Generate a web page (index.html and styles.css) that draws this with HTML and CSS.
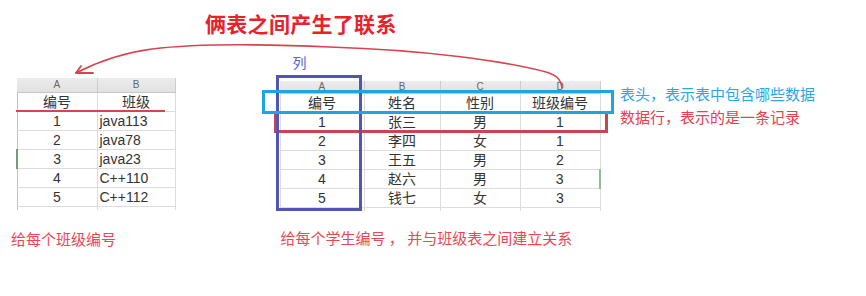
FILE: index.html
```
<!DOCTYPE html>
<html lang="zh-CN">
<head>
<meta charset="utf-8">
<title>俩表之间产生了联系</title>
<link rel="stylesheet" href="styles.css">
</head>
<body>
<h1 class="title">俩表之间产生了联系</h1>
<main class="stage">
  <section class="panel panel-class">
    <table class="sheet sheet-class">
      <colgroup><col class="w80"><col class="w78"></colgroup>
      <tr class="letters"><th>A</th><th>B</th></tr>
      <tr><td>编号</td><td>班级</td></tr>
      <tr><td>1</td><td class="left">java113</td></tr>
      <tr><td>2</td><td class="left">java78</td></tr>
      <tr><td class="sel-left">3</td><td class="left">java23</td></tr>
      <tr><td>4</td><td class="left">C++110</td></tr>
      <tr><td>5</td><td class="left">C++112</td></tr>
      <tr class="stub"><td></td><td></td></tr>
    </table>
    <p class="note note-class">给每个班级编号</p>
  </section>
  <section class="panel panel-student">
    <p class="col-label">列</p>
    <table class="sheet sheet-student">
      <colgroup><col class="w84"><col class="w76"><col class="w80"><col class="w80"></colgroup>
      <tr class="letters"><th>A</th><th>B</th><th>C</th><th>D</th></tr>
      <tr><td>编号</td><td>姓名</td><td>性别</td><td>班级编号</td></tr>
      <tr><td>1</td><td>张三</td><td>男</td><td>1</td></tr>
      <tr><td>2</td><td>李四</td><td>女</td><td>1</td></tr>
      <tr><td>3</td><td>王五</td><td>男</td><td>2</td></tr>
      <tr><td>4</td><td>赵六</td><td>男</td><td class="sel-right">3</td></tr>
      <tr><td>5</td><td>钱七</td><td>女</td><td>3</td></tr>
      <tr class="stub"><td></td><td></td><td></td><td></td></tr>
    </table>
    <p class="note note-student">给每个学生编号 ， 并与班级表之间建立关系</p>
  </section>
  <aside class="legend">
    <p class="legend-head">表头，表示表中包含哪些数据</p>
    <p class="legend-row">数据行，表示的是一条记录</p>
  </aside>
</main>
<div class="underline"></div>
<div class="box box-row"></div>
<div class="box box-col"></div>
<div class="box box-head"></div>
<svg class="arrow" width="866" height="296" viewBox="0 0 866 296">
  <path d="M562 88 C561 79 556 75 546 72 C505 61 425 50 330 47 C262 44 192 44 152 49 C122 53 97 62 76 73" fill="none" stroke="#d8434e" stroke-width="1.6" stroke-linecap="round"/>
  <path d="M81 66 L76 73 L93 73" fill="none" stroke="#d8434e" stroke-width="1.8" stroke-linecap="round" stroke-linejoin="round"/>
</svg>
</body>
</html>
```

FILE: styles.css
```
html, body {
  margin: 0;
  padding: 0;
}
body {
  position: relative;
  width: 866px;
  height: 296px;
  overflow: hidden;
  background: #ffffff;
  font-family: "Noto Sans CJK SC", "Liberation Sans", sans-serif;
}
.title {
  margin: 0;
  padding: 9px 0 0 205px;
  height: 28px;
  font-size: 21px;
  line-height: 28px;
  font-weight: bold;
  color: #e8212b;
  letter-spacing: 0.3px;
}
.stage {
  display: flex;
  align-items: flex-start;
}
.panel {
  display: flex;
  flex-direction: column;
}
.panel-class {
  margin: 41px 0 0 16px;
}
.panel-student {
  margin: 17px 0 0 104px;
}
.col-label {
  margin: 0;
  padding-left: 13px;
  height: 16px;
  font-size: 14px;
  line-height: 16px;
  color: #5b5fd3;
}
.sheet {
  border-collapse: collapse;
  table-layout: fixed;
  font-family: "Liberation Sans", "Noto Sans CJK SC", sans-serif;
  font-size: 14px;
  line-height: 17px;
  color: #333333;
}
.sheet-student {
  margin-top: 11px;
}
.w80 { width: 80px; }
.w78 { width: 78px; }
.w84 { width: 84px; }
.w76 { width: 76px; }
.sheet th {
  padding: 0;
  font-weight: normal;
  font-size: 10px;
  color: #666666;
  background: linear-gradient(#ececec, #e1e1e1);
  border-right: 1px solid #cdcdcd;
  border-bottom: 1px solid #c6c6c6;
}
.sheet-class th {
  height: 14px;
  line-height: 14px;
}
.sheet-student th {
  height: 12px;
  line-height: 12px;
}
.sheet td {
  padding: 1px 0 0;
  height: 16px;
  text-align: center;
  border: 1px solid #dcdcdc;
  white-space: nowrap;
}
.sheet td.left {
  text-align: left;
  padding-left: 2px;
}
.sheet-class td:first-child {
  border-left: 1px solid #c2c2c2;
}
.sheet td.sel-left {
  border-left: 2px solid #6e9e78;
}
.sheet td.sel-right {
  border-right: 2px solid #8fbf95;
}
.sheet tr.stub td {
  height: 3px;
  padding: 0;
  line-height: 0;
  border-bottom: none;
}
.note {
  margin: 0;
  font-family: "Noto Sans CJK SC", sans-serif;
  font-size: 15px;
  line-height: 20px;
  color: #ec4652;
  white-space: nowrap;
}
.note-class {
  margin: 19px 0 0 -5px;
}
.note-student {
  margin: 17px 0 0 1px;
}
.legend {
  margin: 45px 0 0 19px;
}
.legend p {
  margin: 0;
  font-size: 15px;
  line-height: 23px;
  white-space: nowrap;
}
.legend-head {
  color: #2ba5e6;
}
.legend-row {
  color: #e9404a;
}
.underline {
  position: absolute;
  left: 16px;
  top: 110px;
  width: 149px;
  height: 2px;
  background: #d8434e;
}
.box {
  position: absolute;
  box-sizing: border-box;
  border-style: solid;
  border-width: 3px;
}
.box-row {
  left: 274px;
  top: 111px;
  width: 334px;
  height: 22px;
  border-color: #c9444e;
}
.box-col {
  left: 276px;
  top: 75px;
  width: 86px;
  height: 136px;
  border-color: #5254b6;
}
.box-head {
  left: 262px;
  top: 90px;
  width: 352px;
  height: 24px;
  border-color: #1ea4e4;
}
.arrow {
  position: absolute;
  left: 0;
  top: 0;
  pointer-events: none;
}
```
